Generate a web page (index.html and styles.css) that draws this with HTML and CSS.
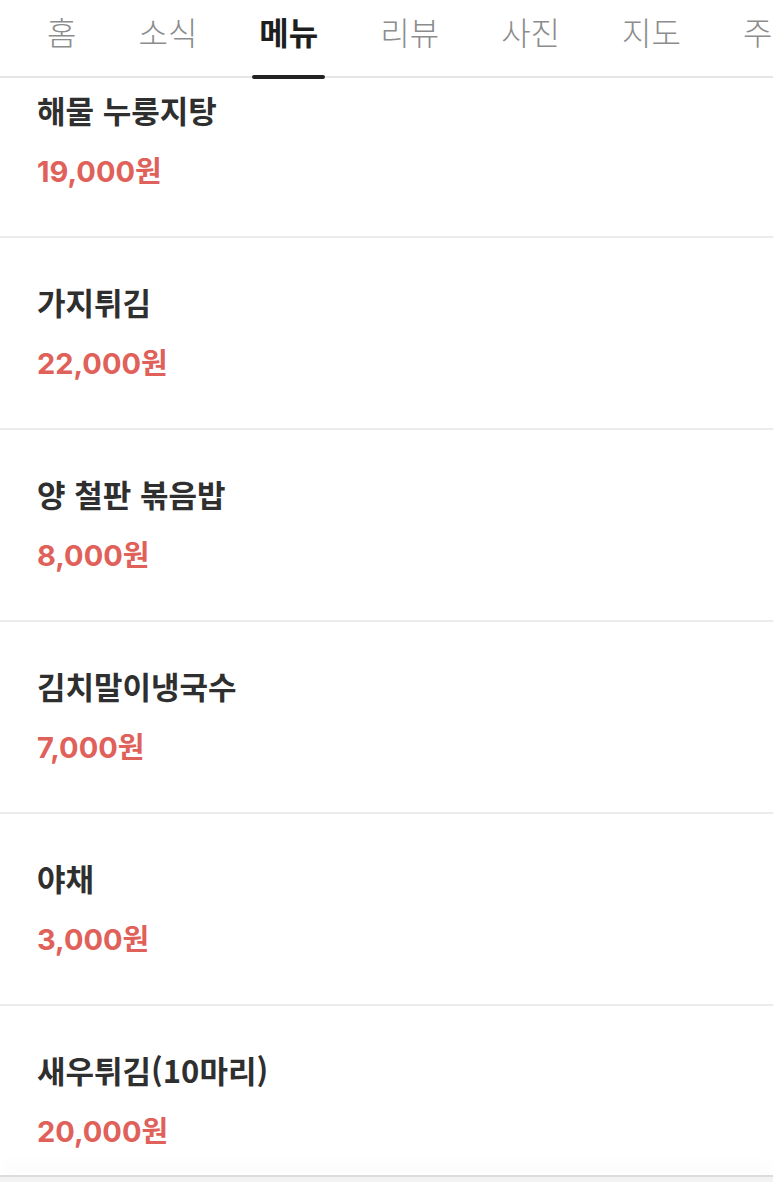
FILE: index.html
```html
<!DOCTYPE html>
<html lang="ko">
<head>
<meta charset="utf-8">
<link rel="stylesheet" href="styles.css">
</head>
<body>
<nav class="tabs">
  <div class="tab">홈</div>
  <div class="tab">소식</div>
  <div class="tab active">메뉴</div>
  <div class="tab">리뷰</div>
  <div class="tab">사진</div>
  <div class="tab">지도</div>
  <div class="tab">주변</div>
</nav>
<ul class="menu">
  <li class="item first"><div class="name">해물 누룽지탕</div><div class="price">19,000원</div></li>
  <li class="item"><div class="name">가지튀김</div><div class="price">22,000원</div></li>
  <li class="item"><div class="name">양 철판 볶음밥</div><div class="price">8,000원</div></li>
  <li class="item"><div class="name">김치말이냉국수</div><div class="price">7,000원</div></li>
  <li class="item"><div class="name">야채</div><div class="price">3,000원</div></li>
  <li class="item"><div class="name">새우튀김(10마리)</div><div class="price">20,000원</div></li>
</ul>
<div class="bottom-bar"></div>
</body>
</html>
```

FILE: styles.css
```css
html, body {
  margin: 0;
  padding: 0;
  background: #ffffff;
  overflow: hidden;
}
body {
  font-family: "Noto Sans CJK KR", "Noto Sans", sans-serif;
  width: 773px;
  height: 1182px;
}
.tabs {
  display: flex;
  gap: 52px;
  padding: 10px 0 0 42px;
  height: 66px;
  border-bottom: 2px solid #e6e6e6;
  white-space: nowrap;
}
.tab {
  position: relative;
  flex: none;
  padding: 0 5px;
  font-size: 32px;
  line-height: 42px;
  font-weight: 300;
  color: #8c8c8c;
  height: 66px;
}
.tab.active {
  font-weight: 700;
  color: #1e1e1e;
}
.tab.active::after {
  content: "";
  position: absolute;
  left: -2px;
  right: -2px;
  bottom: -3px;
  height: 4px;
  border-radius: 2px;
  background: #222222;
}
.menu {
  list-style: none;
  margin: 0;
  padding: 0;
}
.item {
  padding: 44px 37px;
  border-bottom: 2px solid #ececec;
  display: flex;
  flex-direction: column;
  gap: 22px;
}
.item.first {
  padding-top: 12px;
}
.name {
  font-size: 31px;
  line-height: 40px;
  font-weight: 700;
  color: #2f2f2f;
}
.price {
  font-family: "Inter", "Noto Sans CJK KR", sans-serif;
  font-size: 29px;
  line-height: 40px;
  font-weight: 700;
  color: #e0605a;
}
.bottom-bar {
  position: fixed;
  left: 0;
  right: 0;
  bottom: 0;
  height: 5px;
  background: #f2f2f2;
  border-top: 2px solid #dcdcdc;
  box-shadow: 0 -10px 14px rgba(0, 0, 0, 0.03);
}
```
